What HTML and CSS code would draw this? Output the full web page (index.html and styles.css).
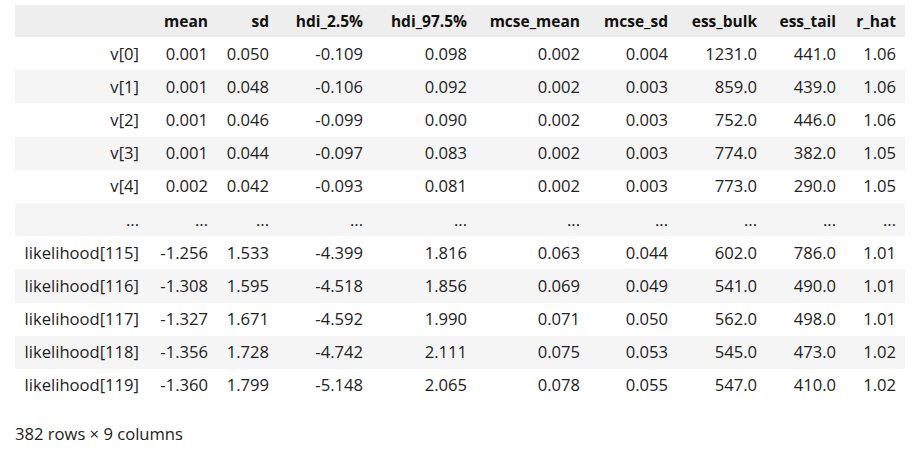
FILE: index.html
```html
<!DOCTYPE html>
<html>
<head>
<meta charset="utf-8">
<link rel="stylesheet" href="styles.css">
</head>
<body>
<div class="output">
<table class="df">
<colgroup>
<col class="c-idx"><col class="c-mean"><col class="c-sd"><col class="c-h1"><col class="c-h2"><col class="c-mm"><col class="c-ms"><col class="c-eb"><col class="c-et"><col class="c-rh">
</colgroup>
<thead>
<tr><th></th><th>mean</th><th>sd</th><th>hdi_2.5%</th><th>hdi_97.5%</th><th>mcse_mean</th><th>mcse_sd</th><th>ess_bulk</th><th>ess_tail</th><th>r_hat</th></tr>
</thead>
<tbody>
<tr><td>v[0]</td><td>0.001</td><td>0.050</td><td>-0.109</td><td>0.098</td><td>0.002</td><td>0.004</td><td>1231.0</td><td>441.0</td><td>1.06</td></tr>
<tr><td>v[1]</td><td>0.001</td><td>0.048</td><td>-0.106</td><td>0.092</td><td>0.002</td><td>0.003</td><td>859.0</td><td>439.0</td><td>1.06</td></tr>
<tr><td>v[2]</td><td>0.001</td><td>0.046</td><td>-0.099</td><td>0.090</td><td>0.002</td><td>0.003</td><td>752.0</td><td>446.0</td><td>1.06</td></tr>
<tr><td>v[3]</td><td>0.001</td><td>0.044</td><td>-0.097</td><td>0.083</td><td>0.002</td><td>0.003</td><td>774.0</td><td>382.0</td><td>1.05</td></tr>
<tr><td>v[4]</td><td>0.002</td><td>0.042</td><td>-0.093</td><td>0.081</td><td>0.002</td><td>0.003</td><td>773.0</td><td>290.0</td><td>1.05</td></tr>
<tr class="ell"><td>...</td><td>...</td><td>...</td><td>...</td><td>...</td><td>...</td><td>...</td><td>...</td><td>...</td><td>...</td></tr>
<tr><td>likelihood[115]</td><td>-1.256</td><td>1.533</td><td>-4.399</td><td>1.816</td><td>0.063</td><td>0.044</td><td>602.0</td><td>786.0</td><td>1.01</td></tr>
<tr><td>likelihood[116]</td><td>-1.308</td><td>1.595</td><td>-4.518</td><td>1.856</td><td>0.069</td><td>0.049</td><td>541.0</td><td>490.0</td><td>1.01</td></tr>
<tr><td>likelihood[117]</td><td>-1.327</td><td>1.671</td><td>-4.592</td><td>1.990</td><td>0.071</td><td>0.050</td><td>562.0</td><td>498.0</td><td>1.01</td></tr>
<tr><td>likelihood[118]</td><td>-1.356</td><td>1.728</td><td>-4.742</td><td>2.111</td><td>0.075</td><td>0.053</td><td>545.0</td><td>473.0</td><td>1.02</td></tr>
<tr><td>likelihood[119]</td><td>-1.360</td><td>1.799</td><td>-5.148</td><td>2.065</td><td>0.078</td><td>0.055</td><td>547.0</td><td>410.0</td><td>1.02</td></tr>
</tbody>
</table>
<p class="shape">382 rows × 9 columns</p>
</div>
</body>
</html>
```
FILE: styles.css
```css
html, body {
  margin: 0;
  padding: 0;
  background: #ffffff;
}
body {
  font-family: "Open Sans", "Noto Sans", sans-serif;
  font-size: 16.6px;
  color: #222222;
}
.output {
  padding: 5px 0 0 15px;
}
.df {
  border-collapse: collapse;
  border-spacing: 0;
  table-layout: fixed;
  width: 890px;
}
.c-idx { width: 133px; }
.c-mean { width: 69px; }
.c-sd { width: 61px; }
.c-h1 { width: 94px; }
.c-h2 { width: 104px; }
.c-mm { width: 113px; }
.c-ms { width: 88px; }
.c-eb { width: 89px; }
.c-et { width: 79px; }
.c-rh { width: 60px; }
.df th, .df td {
  text-align: right;
  padding: 0 9px 0 0;
  height: 33.2px;
  line-height: 20px;
  white-space: nowrap;
  vertical-align: middle;
}
.df thead th {
  background: #eeeeee;
  font-size: 15.5px;
  font-weight: 700;
  color: #111111;
  height: 32px;
}
.df tbody tr:nth-child(even) td {
  background: #f5f5f5;
}
.df tbody td {
  font-weight: 400;
}
.shape {
  margin: 0;
  padding-top: 21px;
  line-height: 22px;
}
```
